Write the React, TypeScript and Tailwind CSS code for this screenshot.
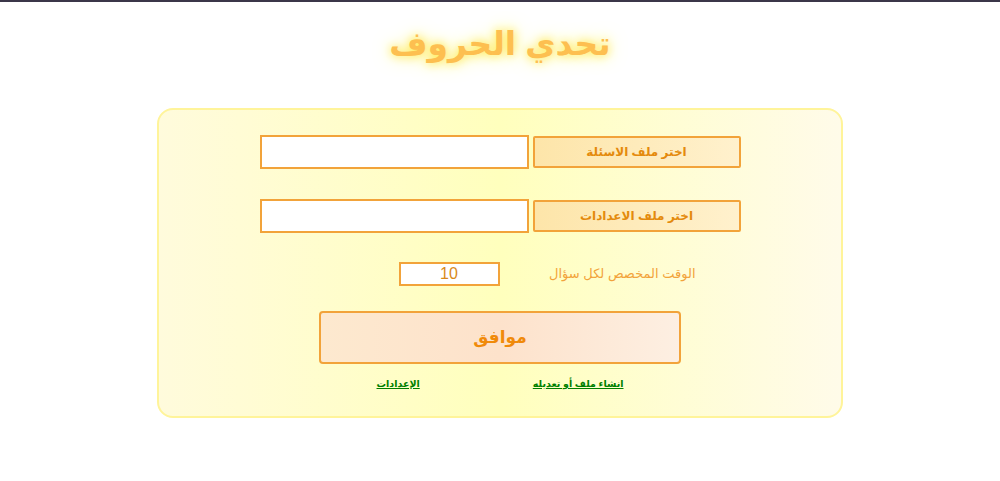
const font = { fontFamily: '"Liberation Sans", "DejaVu Sans", Arial, sans-serif' };

const FileRow = ({ label }: { label: string }) => (
  <div className="flex flex-row-reverse items-center gap-[4px]">
    <button className="w-[208px] h-[32px] border-2 border-[#f2a33a] rounded-[2px] bg-gradient-to-r from-[#fde5a9] to-[#fff1cd] text-[12px] font-bold text-[#e48a0c]">
      {label}
    </button>
    <div className="w-[269px] h-[34px] border-2 border-[#f2a33a] bg-white" />
  </div>
);

export default function App() {
  return (
    <div dir="rtl" className="min-h-[481px] bg-white" style={font}>
      <div className="h-[2px] bg-[#3b3649]" />

      <h1
        className="text-center text-[33px] font-bold text-[#fdbf50] pt-[20px] leading-[44px]"
        style={{ textShadow: "0 0 10px #ffe94a, 0 0 18px #fff27a" }}
      >
        تحدي الحروف
      </h1>

      <div className="mt-[42px] mx-auto w-[686px] h-[310px] rounded-[16px] border-2 border-[#fff49a] bg-gradient-to-r from-[#fffbdc] via-[#ffffbd] to-[#fffbe9] pt-[25px]">
        <div dir="ltr" className="w-[481px] mx-auto flex flex-col">
          <FileRow label="اختر ملف الاسئلة" />
          <div className="h-[30px]" />
          <FileRow label="اختر ملف الاعدادات" />

          <div className="mt-[29px] flex flex-row-reverse items-center pr-[45px]">
            <span dir="rtl" className="w-[149px] text-right text-[13px] text-[#f2a33a] whitespace-nowrap">الوقت المخصص لكل سؤال</span>
            <div className="w-[101px] h-[24px] mr-[47px] border-2 border-[#f2a33a] bg-white flex items-center justify-center text-[16px] text-[#d98a1a]">
              10
            </div>
          </div>

          <button className="mt-[25px] mx-auto w-[362px] h-[53px] border-2 border-[#f2a33a] rounded-[4px] bg-gradient-to-r from-[#fde9cf] via-[#fde2cb] to-[#fdefe2] text-[17px] font-bold text-[#f08a0a]">
            موافق
          </button>

          <div className="mt-[13px] flex justify-between px-[117px] text-[9.5px] font-bold">
            <a href="#" className="text-[#008000] underline">الإعدادات</a>
            <a href="#" className="text-[#008000] underline">انشاء ملف أو تعديله</a>
          </div>
        </div>
      </div>
    </div>
  );
}
